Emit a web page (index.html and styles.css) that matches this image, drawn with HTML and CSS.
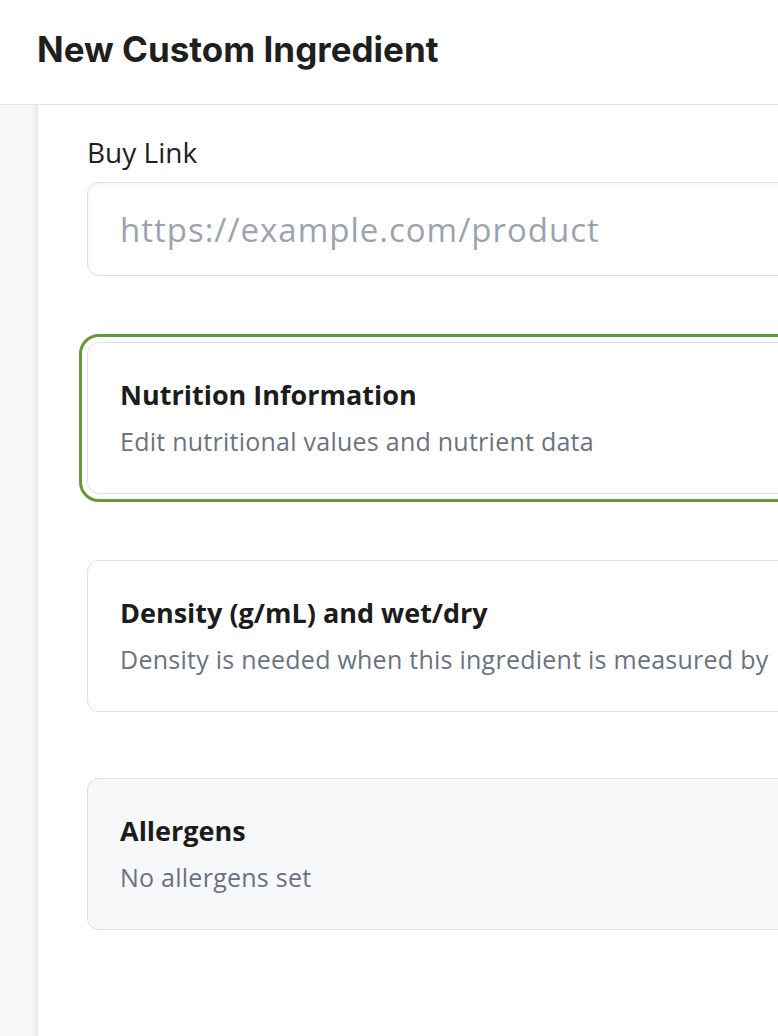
FILE: index.html
```html
<!DOCTYPE html>
<html lang="en">
<head>
    <meta charset="UTF-8">
    <meta name="viewport" content="width=device-width, initial-scale=1.0">
    <title>New Custom Ingredient</title>
    <link rel="stylesheet" href="styles.css">
</head>
<body>
    <header class="topbar">
        <h1 class="topbar-title">New Custom Ingredient</h1>
    </header>

    <div class="layout">
        <aside class="rail"></aside>

        <main class="panel">
            <div class="field">
                <label class="field-label" for="buy-link">Buy Link</label>
                <input class="field-input" id="buy-link" type="text" placeholder="https://example.com/product">
            </div>

            <section class="section-card is-focused">
                <h2 class="section-title">Nutrition Information</h2>
                <p class="section-desc">Edit nutritional values and nutrient data</p>
            </section>

            <section class="section-card">
                <h2 class="section-title">Density (g/mL) and wet/dry</h2>
                <p class="section-desc">Density is needed when this ingredient is measured by</p>
            </section>

            <section class="section-card is-muted">
                <h2 class="section-title">Allergens</h2>
                <p class="section-desc">No allergens set</p>
            </section>
        </main>
    </div>
</body>
</html>
```

FILE: styles.css
```css
* {
    box-sizing:border-box;
}
html, body {
    margin:0;
    height:100%;
    overflow:hidden;
    background:#fff;
}
body {
    font-family:"Open Sans", "Noto Sans", sans-serif;
    color:#1f1f1f;
}

/* top bar */
.topbar {
    height:105px;
    display:flex;
    align-items:center;
    padding:0 0 7px 37px;
    border-bottom:1px solid #e1e4e8;
    background:#fff;
}
.topbar-title {
    margin:0;
    font-family:Inter, "Liberation Sans", sans-serif;
    font-size:35px;
    font-weight:700;
    letter-spacing:0;
    color:#1f1f1f;
}

/* body */
.layout {
    display:flex;
    height:calc(100% - 105px);
}
.rail {
    flex:0 0 38px;
    background:#f7f7f8;
    border-right:1px solid #e6e6ea;
    box-shadow:inset -4px 0 4px -3px rgba(0,0,0,0.08);
}
.panel {
    flex:0 0 800px;
    padding:29px 0 0 49px;
    display:flex;
    flex-direction:column;
    gap:66px;
}

.field {
    display:flex;
    flex-direction:column;
}
.field-label {
    font-size:28px;
    line-height:36px;
    margin-bottom:12px;
    color:#1f1f1f;
}
.field-input {
    height:94px;
    width:100%;
    padding:0 32px;
    border:1px solid #dcdfe4;
    border-radius:12px;
    background:#fff;
    box-shadow:inset 0 2px 6px rgba(0,0,0,0.05);
    font-family:inherit;
    font-size:33px;
    letter-spacing:1px;
    color:#1f1f1f;
    outline:none;
}
.field-input::placeholder {
    color:#9ca3af;
}

/* section cards */
.section-card {
    padding:34px 32px 36px;
    border:1px solid #dcdfe4;
    border-radius:12px;
    background:#fff;
}
.section-card.is-focused {
    outline:3px solid #65983b;
    outline-offset:5px;
}
.section-card.is-muted {
    background:#f7f8fa;
}
.section-title {
    margin:0;
    font-size:27px;
    line-height:36px;
    font-weight:700;
    color:#1c1c1c;
}
.section-desc {
    margin:12px 0 0;
    font-size:25px;
    line-height:32px;
    letter-spacing:0.25px;
    color:#6b7280;
    white-space:nowrap;
}
```
